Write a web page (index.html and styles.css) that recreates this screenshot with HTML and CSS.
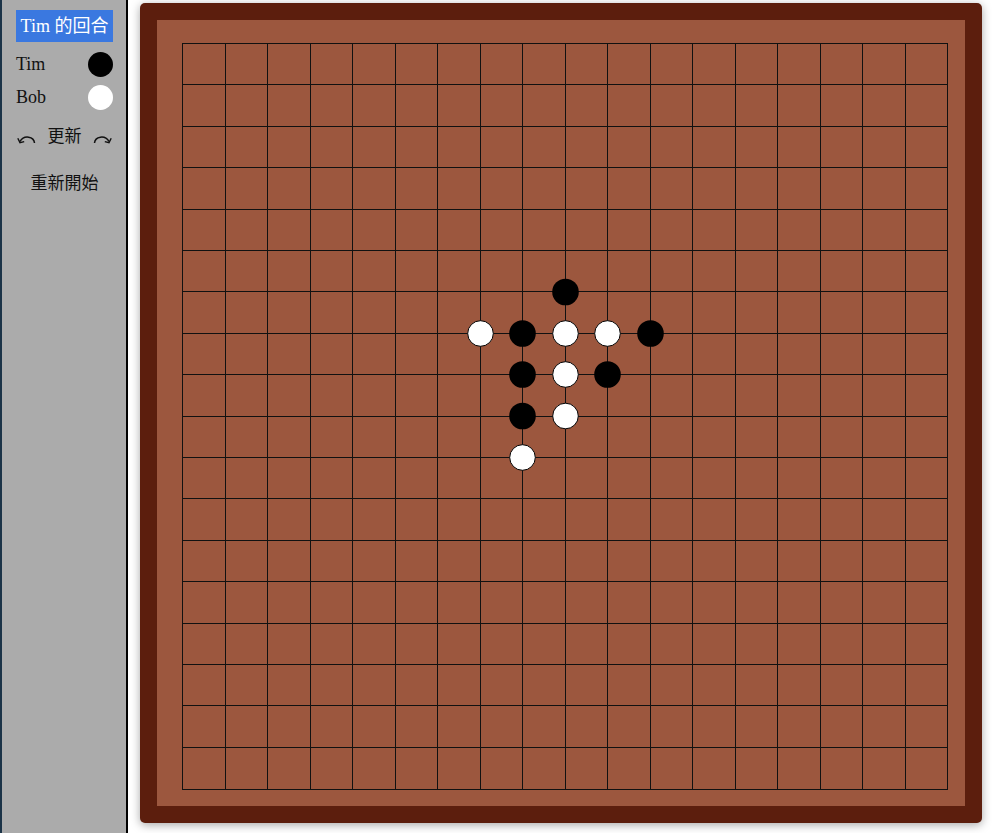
FILE: index.html
```html
<!DOCTYPE html>
<html lang="zh-Hant">
<head>
<meta charset="utf-8">
<title>五子棋</title>
<link rel="stylesheet" href="styles.css">
</head>
<body>
<div class="app">
  <aside class="sidebar">
    <div class="turn">Tim 的回合</div>
    <div class="player"><span class="name">Tim</span><span class="stone black"></span></div>
    <div class="player"><span class="name">Bob</span><span class="stone white"></span></div>
    <div class="history">
      <svg class="arrow" width="20" height="10" viewBox="0 0 20 10" aria-label="undo">
        <path d="M18.5 9 C18 2.5 8 0.5 4 7.5" fill="none" stroke="#111" stroke-width="1.5"/>
        <path d="M1.8 4.2 L4 8.6 L8.2 7.6" fill="none" stroke="#111" stroke-width="1.4"/>
      </svg>
      <span class="refresh">更新</span>
      <svg class="arrow" width="20" height="10" viewBox="0 0 20 10" aria-label="redo">
        <g transform="translate(20 0) scale(-1 1)">
          <path d="M18.5 9 C18 2.5 8 0.5 4 7.5" fill="none" stroke="#111" stroke-width="1.5"/>
          <path d="M1.8 4.2 L4 8.6 L8.2 7.6" fill="none" stroke="#111" stroke-width="1.4"/>
        </g>
      </svg>
    </div>
    <div class="restart">重新開始</div>
  </aside>
  <main class="main">
    <div class="board">
      <div class="surface">
        <svg class="grid" width="766" height="747" viewBox="0 0 766 747" shape-rendering="crispEdges">
          <g fill="#111">
            <rect x="0" y="0" width="1" height="747"/>
            <rect x="43" y="0" width="1" height="747"/>
            <rect x="85" y="0" width="1" height="747"/>
            <rect x="128" y="0" width="1" height="747"/>
            <rect x="170" y="0" width="1" height="747"/>
            <rect x="213" y="0" width="1" height="747"/>
            <rect x="255" y="0" width="1" height="747"/>
            <rect x="298" y="0" width="1" height="747"/>
            <rect x="340" y="0" width="1" height="747"/>
            <rect x="383" y="0" width="1" height="747"/>
            <rect x="425" y="0" width="1" height="747"/>
            <rect x="468" y="0" width="1" height="747"/>
            <rect x="510" y="0" width="1" height="747"/>
            <rect x="553" y="0" width="1" height="747"/>
            <rect x="595" y="0" width="1" height="747"/>
            <rect x="638" y="0" width="1" height="747"/>
            <rect x="680" y="0" width="1" height="747"/>
            <rect x="723" y="0" width="1" height="747"/>
            <rect x="765" y="0" width="1" height="747"/>
            <rect x="0" y="0" width="766" height="1"/>
            <rect x="0" y="41" width="766" height="1"/>
            <rect x="0" y="83" width="766" height="1"/>
            <rect x="0" y="124" width="766" height="1"/>
            <rect x="0" y="166" width="766" height="1"/>
            <rect x="0" y="207" width="766" height="1"/>
            <rect x="0" y="248" width="766" height="1"/>
            <rect x="0" y="290" width="766" height="1"/>
            <rect x="0" y="331" width="766" height="1"/>
            <rect x="0" y="373" width="766" height="1"/>
            <rect x="0" y="414" width="766" height="1"/>
            <rect x="0" y="455" width="766" height="1"/>
            <rect x="0" y="497" width="766" height="1"/>
            <rect x="0" y="538" width="766" height="1"/>
            <rect x="0" y="580" width="766" height="1"/>
            <rect x="0" y="621" width="766" height="1"/>
            <rect x="0" y="662" width="766" height="1"/>
            <rect x="0" y="704" width="766" height="1"/>
            <rect x="0" y="746" width="766" height="1"/>
          </g>
          <g shape-rendering="geometricPrecision">
            <circle cx="383.5" cy="249" r="13.3" fill="#000"/>
            <circle cx="298.5" cy="290.5" r="12.8" fill="#fff" stroke="#000" stroke-width="1"/>
            <circle cx="340.5" cy="290.5" r="13.3" fill="#000"/>
            <circle cx="383.5" cy="290.5" r="12.8" fill="#fff" stroke="#000" stroke-width="1"/>
            <circle cx="425.5" cy="290.5" r="12.8" fill="#fff" stroke="#000" stroke-width="1"/>
            <circle cx="468.5" cy="290.5" r="13.3" fill="#000"/>
            <circle cx="340.5" cy="331.5" r="13.3" fill="#000"/>
            <circle cx="383.5" cy="331.5" r="12.8" fill="#fff" stroke="#000" stroke-width="1"/>
            <circle cx="425.5" cy="331.5" r="13.3" fill="#000"/>
            <circle cx="340.5" cy="373" r="13.3" fill="#000"/>
            <circle cx="383.5" cy="373" r="12.8" fill="#fff" stroke="#000" stroke-width="1"/>
            <circle cx="340.5" cy="414.5" r="12.8" fill="#fff" stroke="#000" stroke-width="1"/>
          </g>
        </svg>
      </div>
    </div>
  </main>
</div>
</body>
</html>
```
FILE: styles.css
```css
html, body {
  margin: 0;
  padding: 0;
  background: #ffffff;
}

body {
  font-family: "Liberation Serif", "Noto Sans CJK TC", serif;
  color: #111;
}

.app {
  display: flex;
  height: 833px;
  overflow: hidden;
}

.sidebar {
  box-sizing: border-box;
  width: 128px;
  flex: none;
  height: 833px;
  background: #ababab;
  border-left: 2px solid #1b3347;
  border-right: 2px solid #000;
  padding: 10px 13px 0 14px;
  display: flex;
  flex-direction: column;
}

.turn {
  height: 32px;
  background: #3a78e0;
  color: #fff;
  font-size: 18px;
  line-height: 32px;
  text-align: center;
  margin-bottom: 10px;
}

.player {
  display: flex;
  justify-content: space-between;
  align-items: center;
  height: 25px;
  margin-bottom: 8px;
  font-size: 18px;
}

.stone {
  width: 25px;
  height: 25px;
  border-radius: 50%;
}

.stone.black { background: #000; }
.stone.white { background: #fff; }

.history {
  display: flex;
  justify-content: space-between;
  align-items: center;
  margin-top: 7px;
  height: 24px;
  font-size: 17px;
  padding: 0 0 0 0;
}

.arrow {
  display: block;
  margin-top: 4px;
}

.refresh {
  line-height: 24px;
}

.restart {
  margin-top: 23px;
  text-align: center;
  font-size: 17px;
  line-height: 24px;
}

.main {
  flex: 1;
  padding: 3px 0 0 12px;
}

.board {
  box-sizing: border-box;
  width: 842px;
  height: 820px;
  padding: 17px;
  background: #5c1e0d;
  border-radius: 5px;
  box-shadow: 0 2px 10px rgba(0, 0, 0, 0.35);
}

.surface {
  box-sizing: border-box;
  width: 808px;
  height: 786px;
  background: #9c573e;
  padding: 23px 0 0 25px;
}

.grid {
  display: block;
}
```
